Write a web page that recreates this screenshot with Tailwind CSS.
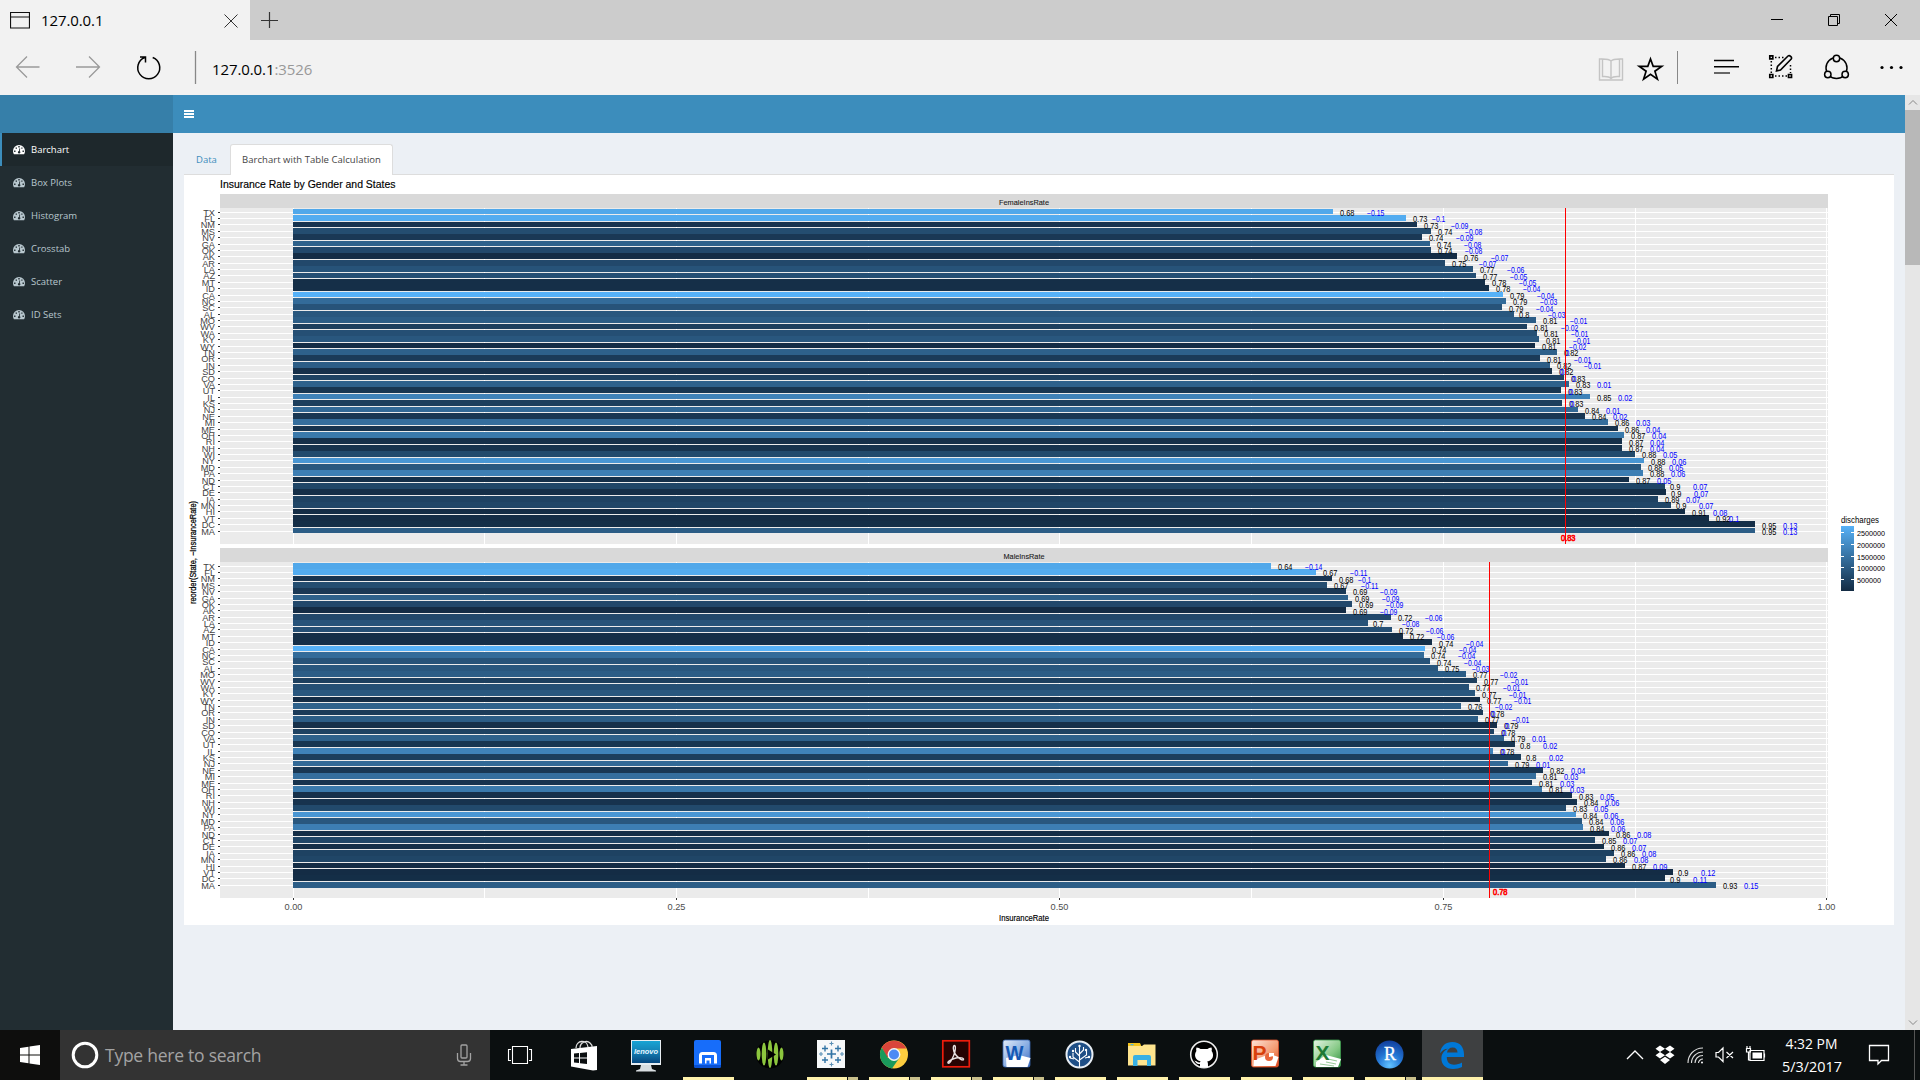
<!DOCTYPE html>
<html lang="en">
<head>
<meta charset="utf-8">
<title>127.0.0.1</title>
<script src="https://cdn.jsdelivr.net/npm/@tailwindcss/browser@4"></script>
</head>
<body class="w-[1920px] h-[1080px] overflow-hidden flex flex-col bg-[#f2f2f2] font-['Open_Sans','Noto_Sans',sans-serif]">
<svg class="hidden">
  <symbol id="dash" viewBox="0 0 12 10"><path fill="currentColor" fill-rule="evenodd" d="M6 0a6 6 0 0 0-6 6c0 1.300.3 2.300.9 3.200h10.200c.6-.9.9-1.900.9-3.200a6 6 0 0 0-6-6zM1.100 5.600h1.400v1.300H1.100zM2.600 2.400h1.400v1.300H2.600zM5.300 1.100h1.400v1.300H5.300zM8.300 2.400h1.200v1.300H8.300zM9.500 5.600h1.400v1.300H9.500zM6.400 3.200l.8.2-.4 2.800c.6.300.8.900.6 1.400-.2.700-.8 1-1.500.9-.7-.2-1.100-.8-1-1.500.1-.5.600-.9 1.100-.9z"/></symbol>
</svg>

<!-- browser tabs -->
<div class="flex h-10 bg-[#cccccc] shrink-0">
  <div class="w-[250px] bg-[#f2f2f2] flex items-center pl-[10px]">
    <svg width="20" height="17" viewBox="0 0 20 17" fill="none" stroke="#111" class="block"><path d="M.5.5h19v15.500h-19zM.5 5h19" stroke-width="1.200"/></svg>
    <span class="ml-[11px] text-[15px] leading-10 text-black w-[183px] tracking-[-0.1px]">127.0.0.1</span>
    <svg width="14" height="14" viewBox="0 0 14 14" stroke="#333" class="mt-px"><path d="M.5.5l13 13M13.500.5l-13 13"/></svg>
  </div>
  <svg width="17" height="17" viewBox="0 0 17 17" stroke="#333" class="ml-[11px] mt-[12px]"><path d="M8.500 0v16M0 8.500h17" stroke-width="1.200"/></svg>
  <div class="flex-1"></div>
  <svg width="140" height="40" viewBox="1765 0 140 40" fill="none" stroke="#000" class="mr-[15px]"><path d="M1771 19.500h12M1828.500 16.500h9v9h-9zM1830.500 16.500v-2h9v9h-2M1885 14l12 12M1897 14l-12 12"/></svg>
</div>

<!-- address bar -->
<div class="flex h-[55px] shrink-0">
  <svg width="200" height="55" viewBox="0 40 200 55" fill="none" stroke="#9a9a9a" stroke-width="1.300">
    <path d="M39.500 67H16.500M27 56.500L16.500 67L27 77.500M76 67h23M89 56.500L99.500 67L89 77.500"/>
    <path stroke="#000" stroke-width="1.500" d="M152.700 57.500A11 11 0 1 1 144.800 57.500M140 57h5.500v5.500"/>
    <path d="M195.500 51v33" stroke="#888"/>
  </svg>
  <span class="ml-[12px] text-[15px] leading-[59px] text-black tracking-[-0.1px]">127.0.0.1<span class="text-[#999]">:3526</span></span>
  <div class="flex-1"></div>
  <svg width="330" height="55" viewBox="1590 40 330 55" fill="none" stroke="#000" stroke-width="1.500">
    <g stroke="#c4c4c4" stroke-width="1.400"><path d="M1602 59h-2.500v21h23v-21h-2.500"/><path d="M1611 61c-2-2-5-2-8.500-2v17.500c3.500 0 6.500-.5 8.500 2c2-2.500 5-2 8.500-2V59c-3.500 0-6.500 0-8.500 2v17"/></g>
    <path stroke-width="1.700" d="M1650.500 59l2.700 7.400h8.500l-6.800 4.800l2.500 8l-6.900-4.800l-6.900 4.800l2.500-8l-6.800-4.800h8.500z"/>
    <path stroke="#888" stroke-width="1" d="M1677.500 51v33"/>
    <path stroke-width="1.400" d="M1714 60.500h20M1714 66.700h25"/><path stroke="#444" stroke-width="1.600" d="M1714 73h16"/>
    <path d="M1769.800 55.800h3v3h-3zM1769.800 74.500h3v3h-3zM1788.500 74.500h3v3h-3z" stroke-width="1.700"/>
    <path d="M1775 57.500h9M1775 76h12M1771.300 61v12M1790.500 65v8" stroke-dasharray="1.500 2"/>
    <path d="M1776.500 71l1-4.500 10.500-10.500c1.500-1.200 4.500 1 3.200 3L1780.500 70z" stroke-width="1.600"/>
    <circle cx="1836.500" cy="68" r="10.500"/><g fill="#f2f2f2"><circle cx="1836.500" cy="58.500" r="3.200"/><circle cx="1827.800" cy="74.500" r="3.200"/><circle cx="1845.200" cy="74.500" r="3.200"/></g>
    <g fill="#000" stroke="none"><circle cx="1882" cy="67.500" r="1.600"/><circle cx="1891.500" cy="67.500" r="1.600"/><circle cx="1901" cy="67.500" r="1.600"/></g>
  </svg>
</div>

<!-- dashboard -->
<div class="flex h-[935px] shrink-0 bg-[#ecf0f5]">
  <aside class="w-[173px] bg-[#222d32] text-[#b8c7ce] text-[9.500px]">
    <div class="h-[38px] bg-[#367fa9]"></div>
    <nav>
      <a class="flex h-[33px] items-center bg-[#1e282c] text-white border-l-2 border-[#3c8dbc] pl-[11px] pt-px gap-[6px]"><svg width="12" height="10"><use href="#dash"/></svg><span class="w-24">Barchart</span></a>
      <a class="flex h-[33px] items-center pl-[13px] pt-px gap-[6px]"><svg width="12" height="10"><use href="#dash"/></svg><span>Box Plots</span></a>
      <a class="flex h-[33px] items-center pl-[13px] pt-px gap-[6px]"><svg width="12" height="10"><use href="#dash"/></svg><span>Histogram</span></a>
      <a class="flex h-[33px] items-center pl-[13px] pt-px gap-[6px]"><svg width="12" height="10"><use href="#dash"/></svg><span>Crosstab</span></a>
      <a class="flex h-[33px] items-center pl-[13px] pt-px gap-[6px]"><svg width="12" height="10"><use href="#dash"/></svg><span>Scatter</span></a>
      <a class="flex h-[33px] items-center pl-[13px] pt-px gap-[6px]"><svg width="12" height="10"><use href="#dash"/></svg><span>ID Sets</span></a>
    </nav>
  </aside>
  <main class="w-[1732px] flex flex-col">
    <div class="h-[38px] bg-[#3c8dbc] pl-[11px] pt-[15px]"><svg width="10" height="9" viewBox="0 0 10 9" fill="#fff"><path d="M0 0h10v2H0zM0 3h10v2H0zM0 6h10v2H0z"/></svg></div>
    <div class="mx-[11px] mt-[11px] flex h-[31px] border-b border-[#dddddd] text-[9.500px]">
      <a class="w-[46px] pl-3 leading-[31px] text-[#3c8dbc]">Data</a>
      <a class="w-[163px] h-[31px] border border-b-0 border-[#ddd] rounded-t-[3px] bg-white text-center leading-[30px] text-[#444] tracking-[0.04px]">Barchart with Table Calculation</a>
    </div>
    <div class="mx-[11px] bg-white h-[750px]"><svg id="chart" class="block" width="1710" height="750" viewBox="184 175 1710 750" font-family="'Liberation Sans',Arial,sans-serif"></svg></div>
  </main>
  <div class="w-[15px] bg-[#e6e6e6] flex flex-col items-center">
    <svg width="15" height="15" viewBox="0 0 15 15" fill="none" stroke="#888"><path d="M4 9.500l4-4 4 4"/></svg>
    <div class="w-[15px] h-[155px] bg-[#b8b8b8]"></div>
    <div class="flex-1"></div>
    <svg width="15" height="15" viewBox="0 0 15 15" fill="none" stroke="#888"><path d="M4 5.500l4 4 4-4"/></svg>
  </div>
</div>

<!-- taskbar -->
<div class="flex h-[50px] shrink-0 bg-[#0b0f10] text-white">
  <div class="w-[60px] flex items-center justify-center bg-[#0e0e0d]"><svg width="20" height="20" viewBox="0 0 20 20" fill="#fff"><path d="M0 3l8.500-1.300V9.500H0zM9.500 1.500L20 0v9.500H9.500zM0 10.500h8.500v7.800L0 17zM9.500 10.500H20V20L9.500 18.500z"/></svg></div>
  <div class="w-[430px] bg-[#333333] flex items-center">
    <svg width="28" height="28" viewBox="0 0 28 28" fill="none" class="ml-[11px]"><circle cx="14" cy="14" r="11.800" stroke="#fff" stroke-width="3"/></svg>
    <span class="ml-[6px] text-[17.500px] w-[351px] text-[#a3a3a3] leading-[50px] tracking-[-0.25px] whitespace-nowrap">Type here to search</span>
    <svg width="16" height="22" viewBox="0 0 16 22" fill="none" stroke="#a3a3a3" stroke-width="1.300"><rect x="5" y="1" width="6" height="13" rx="1"/><path d="M1.500 9v5.500c0 2 1 3 3 3h7c2 0 3-1 3-3V9M8 17.500v3.500M4.500 21h7"/></svg>
  </div>
  <svg width="1430" height="50" viewBox="490 1030 1430 50">
    <defs>
      <linearGradient id="scr" x1="0" y1="0" x2="0" y2="1"><stop offset="0" stop-color="#18a4d4"/><stop offset=".5" stop-color="#1580b4"/><stop offset="1" stop-color="#07477f"/></linearGradient>
      <radialGradient id="rb" cx=".5" cy=".9" r=".9"><stop offset="0" stop-color="#62c4ff"/><stop offset=".5" stop-color="#2274d2"/><stop offset="1" stop-color="#123e9c"/></radialGradient>
      <linearGradient id="wd" x1="0" y1="0" x2="1" y2="1"><stop offset="0" stop-color="#e4edfa"/><stop offset=".6" stop-color="#7ea6e0"/><stop offset="1" stop-color="#3c6cc0"/></linearGradient>
      <linearGradient id="pp" x1="0" y1="0" x2="1" y2="1"><stop offset="0" stop-color="#fde4d8"/><stop offset=".6" stop-color="#f39a70"/><stop offset="1" stop-color="#d9471c"/></linearGradient>
      <linearGradient id="xl" x1="0" y1="0" x2="1" y2="1"><stop offset="0" stop-color="#e6f5e4"/><stop offset=".6" stop-color="#84c884"/><stop offset="1" stop-color="#2c8c3c"/></linearGradient>
    </defs>
    <rect x="1422" y="1030" width="61" height="50" fill="#3e4041"/>
    <g fill="#fff2ab"><path d="M683 1077h51v3h-51zM807 1077h40v3h-40zM869 1077h40v3h-40zM931 1077h40v3h-40zM993 1077h40v3h-40zM1055 1077h51v3h-51zM1117 1077h51v3h-51zM1179 1077h51v3h-51zM1241 1077h51v3h-51zM1303 1077h51v3h-51zM1365 1077h40v3h-40zM1422 1077h61v3h-61z"/></g>
    <path fill="#c9c08c" d="M848 1077h10v3h-10zM910 1077h10v3h-10zM972 1077h10v3h-10zM1034 1077h10v3h-10zM1406 1077h10v3h-10z"/>
    <path fill="none" stroke="#fff" stroke-width="1.100" d="M512.500 1046.500h15v17h-15zM511 1049.500h-2.500v11h2.500M529 1049.500h2.500v11h-2.500"/>
    <g><path fill="#fff" d="M571 1049l26-3v24l-4 .5-22-4z"/><path fill="none" stroke="#ddd" stroke-width="1.300" d="M576 1048c0-8 11-9 12-1M580 1048c0-6 7-8 10-5s2 3 2 4"/><path fill="#0b0f10" d="M574 1053.500l5-.5v4.500h-5zM580 1053l7-.7v5.200h-7zM574 1058.500h5v4.500l-5-.5zM580 1058.500h7v5.500l-7-.8z"/></g>
    <g><path fill="#e8eef2" d="M631 1040h30v25h-30z"/><path fill="url(#scr)" d="M632 1041h28v22h-28z"/><path fill="#d8dde0" d="M641 1065h10l1 4 4 1.500v1h-20v-1l4-1.500z"/><text x="646" y="1054" font-size="6.500" font-weight="bold" font-style="italic" fill="#e8f6ff" text-anchor="middle" textLength="24" lengthAdjust="spacingAndGlyphs" font-family="Liberation Sans,sans-serif">lenovo</text></g>
    <g><rect x="694" y="1040" width="27" height="28" rx="2" fill="#176dfa"/><path fill="#0a50d0" d="M694 1065h27v1a2 2 0 0 1-2 2h-23a2 2 0 0 1-2-2z"/><path fill="none" stroke="#fff" stroke-width="3" d="M700.500 1063.500v-8c0-1.500 0-2 2-2h11c2 0 2 .5 2 2v8"/><path fill="#fff" d="M705 1058h6v5.500h-1.500v-3h-3v3H705z"/></g>
    <g><circle cx="770" cy="1054.500" r="14" fill="#000"/><g fill="#8cc63e"><ellipse cx="758.500" cy="1054" rx="2" ry="6.500"/><ellipse cx="764" cy="1054" rx="2.300" ry="11.500"/><ellipse cx="770" cy="1054" rx="2.300" ry="14"/><ellipse cx="776" cy="1054" rx="2.300" ry="11.500"/><ellipse cx="781.500" cy="1054" rx="2" ry="6.500"/></g><path d="M768 1049.500l8 5-8 5z" fill="#000"/></g>
    <g><rect x="817" y="1040" width="28" height="28" fill="#f6f8f9"/><path fill="none" stroke="#3274a5" stroke-width="1.700" d="M827 1054h9M831.500 1049.500v9"/><path stroke="#3274a5" stroke-width="1.400" d="M822 1048.500h6M825 1045.500v6M835 1048.500h6M838 1045.500v6M822 1060h6M825 1057v6M835 1060h6M838 1057v6"/><path stroke="#5a8fb5" stroke-width="1.100" d="M829.500 1043.500h4M831.500 1041.500v4M829.500 1064.500h4M831.500 1062.500v4M819 1054h4M821 1052v4M840 1054h4M842 1052v4"/></g>
    <g><circle cx="894" cy="1054.500" r="14" fill="#fdcd3f"/><path fill="#d9453a" d="M881.800 1047.500A14 14 0 0 1 906.400 1048.500H894L887 1058z"/><path fill="#1a9a5b" d="M881.800 1047.500A14 14 0 0 0 892 1068.400L900 1057l-12 1z"/><circle cx="894" cy="1054.500" r="6.400" fill="#f4f6f4"/><circle cx="894" cy="1054.500" r="5" fill="#4b8bf4"/></g>
    <g><rect x="942.800" y="1040.800" width="26.500" height="26" fill="#260302" stroke="#ec1c0c" stroke-width="1.700"/><path fill="none" stroke="#e8e0e0" stroke-width="1.400" d="M948 1063c-1-1.500 4-4 8-5s8 0 7.500 1.500-5-1-8-5-2.500-9-1-9 1 6-1 10.500-4 8-5.500 7z"/></g>
    <g><rect x="1003" y="1040" width="27" height="27" rx="2" fill="url(#wd)" stroke="#3a68b4" stroke-width=".8"/><path fill="#fff" d="M1006 1058l13-3 11.500 3-3 9h-21z"/><text x="1014.500" y="1060" font-size="21" font-weight="bold" text-anchor="middle" fill="#1458b4" textLength="18" lengthAdjust="spacingAndGlyphs" font-family="Liberation Sans,sans-serif">W</text></g>
    <g><circle cx="1079.500" cy="1054.500" r="13" fill="#1f4f86" stroke="#e8eef4" stroke-width="2"/><g stroke="#fff" fill="none" stroke-width="1.100"><path d="M1079.500 1067v-20M1079.500 1062l-6.500-5v-4M1079.500 1060l7-5v-5M1079.500 1056l-4-4v-4M1079.500 1054l4-4v-3M1074 1059l-4-1M1085 1058l4-1"/></g><g fill="#fff"><circle cx="1079.500" cy="1046" r="1.200"/><circle cx="1073" cy="1051" r="1.200"/><circle cx="1086" cy="1050" r="1.200"/><circle cx="1070" cy="1057" r="1.200"/><circle cx="1089" cy="1057" r="1.200"/></g></g>
    <g><path fill="#f2c31c" d="M1128 1043h12l1.500 3.500H1128z"/><path fill="#fee48e" d="M1128 1046h14l2-1.500h11.500v21h-27.500z"/><path fill="#4ab2e4" d="M1130.500 1044h3v1.300h-3z"/><path fill="#38b0e4" d="M1133 1057a2 2 0 0 1 2-2h14a2 2 0 0 1 2 2v9h-4v-6h-9.500v6h-4.500z"/></g>
    <g><circle cx="1204" cy="1054.500" r="13.300" fill="#000" stroke="#eee" stroke-width="1.500"/><path fill="#fff" d="M1196.500 1047.500c2 0 3 1 4 1.600h7c1-.6 2-1.600 4-1.600.6 1.700.3 2.700.1 3.500 3 4 1.400 9.500-4.400 10.500.8 1 .8 2 .8 5.500h-8v-3c-4 .6-4-2.500-6-3.200 2.500-.5 3 2 6 1.600 0-.5.200-.8.700-1.200-5.800-1-7-6.500-4.300-10.200-.2-.800-.5-1.800.1-3.500z"/></g>
    <g><rect x="1251.500" y="1040" width="27" height="27" rx="2" fill="url(#pp)" stroke="#d9522c" stroke-width=".8"/><path fill="#fff" d="M1254 1060l16-6 8.500 3-3 9h-22z"/><circle cx="1269" cy="1057" r="4" fill="#e8663a"/><path fill="#fff" d="M1269 1057v-4h5v3z"/><text x="1259.500" y="1060" font-size="21" font-weight="bold" text-anchor="middle" fill="#d8400c" font-family="Liberation Sans,sans-serif">P</text></g>
    <g><rect x="1313.500" y="1040" width="27" height="27" rx="2" fill="url(#xl)" stroke="#3c9a4c" stroke-width=".8"/><path fill="#fff" d="M1316 1062l10-7 15 4-3 8h-22z"/><path stroke="#9aca9a" stroke-width="1.200" d="M1328 1059l9 2M1326 1062l10 2M1320 1064l14 2"/><text x="1322.500" y="1060" font-size="21" font-weight="bold" text-anchor="middle" fill="#1e7a34" font-family="Liberation Sans,sans-serif">X</text></g>
    <g><circle cx="1389.500" cy="1054.500" r="14" fill="url(#rb)"/><text x="1390" y="1060" font-size="18" text-anchor="middle" fill="#fff" stroke="#fff" stroke-width=".3" font-family="Liberation Serif,serif">R</text></g>
    <path fill="#0078d7" d="M1440 1053.300c1-7.500 6-11.300 12.300-11.300 8 0 11.700 5.600 11.700 12v3h-17.200c0 5.600 3.200 7.700 7.200 7.700 3.200 0 5.700-.8 8-2.200v4.600c-2.500 1.200-5.500 1.900-9 1.900-7.200 0-11.600-4.500-11.600-10.500 0-4.500 2.500-8 6.600-9.800-3.500 0-6 1.800-8 4.600zM1447 1052.500h10.500c0-3-1.600-5-4.800-5s-5.300 2-5.700 5z"/>
    <g fill="none" stroke="#fff" stroke-width="1.300"><path d="M1627 1059l8-8 8 8"/>
      <path fill="#fff" stroke="none" fill-rule="evenodd" d="M1660 1045.500l5 3.200 5-3.200 4.500 3.200-4.500 3.300 4.500 3.300-4.500 3.200-5-3.200-5 3.200-4.500-3.200 4.500-3.300-4.500-3.300zM1665 1048.700l-5 3.300 5 3.300 5-3.300zM1660 1060l5-3.300 5 3.300-5 4z"/>
      <path stroke-width="1.100" stroke="#ddd" d="M1688 1063c0-8 6-15 15-15M1691.500 1063c0-6 5-11 11.500-11M1695 1063c0-4 3-7.500 8-7.500M1698.500 1063c0-2 2-4 4.500-4"/><circle cx="1702" cy="1062.500" r="1" fill="#fff" stroke="none"/>
      <path stroke-width="1.200" d="M1716 1052.500h2.500l4.500-4.500v13.500l-4.500-4.500h-2.500zM1726.500 1052l6.500 6M1733 1052l-6.500 6"/>
      <path stroke-width="1.200" d="M1750 1050.500h14v10h-14zM1764.500 1053.500v4M1746.500 1048.500h4v3.500h-4zM1747 1048v-2M1750 1048v-2M1748.500 1052v8h2"/><path fill="#fff" stroke="none" d="M1752.500 1052.500h9.500v6h-9.500z"/>
      <path d="M1869.500 1045.500h19v15h-7l-3.500 3.500v-3.500h-8.500z"/></g>
    <g font-family="'Open Sans',sans-serif" font-size="14.500" fill="#fff" text-anchor="middle"><text x="1811.500" y="1049" textLength="52" lengthAdjust="spacingAndGlyphs">4:32 PM</text><text x="1812" y="1072" textLength="60" lengthAdjust="spacingAndGlyphs">5/3/2017</text></g>
    <path stroke="#555" d="M1914.500 1030v50"/>
  </svg>
</div>

<script>
const states='TX FL NM MS NV GA OK AK AR LA AZ MT ID CA NC SC AL MO WV WA KY WY TN OR IN SD CO VA UT IL KS NJ NE MI ME OH RI NH WI NY MD PA ND CT DE IA MN HI VT DC MA'.split(' ');
// discharges as a fraction of the colour scale
const shade=[.93,.96,.07,.25,.1,.4,.22,.01,.22,.3,.27,.03,.03,1,.48,.3,.33,.37,.15,.27,.33,.01,.4,.12,.37,.04,.17,.4,.08,.65,.14,.46,.09,.5,.06,.58,.04,.06,.23,.8,.33,.62,.02,.2,.03,.17,.2,.01,.01,.02,.37];
const facets=[
 {name:'FemaleInsRate',top:208,off:0,mean:1565,meanLabel:'0.83',meanX:1561,
  end:[1333,1406,1417,1431,1422,1430,1431,1457,1445,1473,1476,1485,1489,1503,1506,1502,1514,1536,1527,1537,1539,1535,1557,1540,1550,1552,1564,1569,1561,1590,1562,1578,1585,1608,1618,1624,1622,1622,1635,1644,1641,1643,1629,1665,1666,1658,1671,1685,1709,1755,1755],
  rate:[68,73,73,74,74,74,74,76,75,77,77,78,78,79,79,79,80,81,81,81,81,81,82,81,82,82,83,83,83,85,83,84,84,86,86,87,87,87,88,88,88,88,87,90,90,89,90,91,92,95,95],
  diff:[-15,-10,-9,-8,-9,-8,-8,-7,-7,-6,-5,-5,-4,-4,-3,-4,-3,-1,-2,-1,-1,-2,0,-1,-1,0,0,1,0,2,0,1,2,3,4,4,4,4,5,6,5,6,5,7,7,7,7,8,10,13,13]},
 {name:'MaleInsRate',top:562,off:354.04,mean:1489,meanLabel:'0.78',meanX:1493,
  end:[1271,1316,1332,1327,1346,1348,1352,1346,1391,1368,1392,1403,1432,1425,1424,1430,1438,1466,1477,1469,1475,1480,1461,1483,1478,1497,1494,1504,1515,1493,1521,1508,1543,1536,1532,1542,1572,1577,1566,1576,1582,1583,1609,1595,1604,1614,1606,1625,1673,1665,1716],
  rate:[64,67,68,67,69,69,69,69,72,70,72,72,74,74,74,74,75,77,77,77,77,77,76,78,77,79,78,79,80,78,80,79,82,81,81,81,83,84,83,84,84,84,86,85,86,86,86,87,90,90,93],
  diff:[-14,-11,-10,-11,-9,-9,-9,-9,-6,-8,-6,-6,-4,-4,-4,-4,-3,-2,-1,-1,-1,-1,-2,0,-1,0,0,1,2,0,2,1,4,3,3,3,5,6,5,6,6,6,8,7,7,8,8,9,12,11,15]}];
const lo=[19,43,67],hi=[86,177,247];
const col=t=>'rgb('+lo.map((v,i)=>Math.round(v+(hi[i]-v)*t)).join()+')';
const rect=(x,y,w,h,f)=>`<rect x="${x}" y="${y}" width="${w}" height="${h}" fill="${f}" shape-rendering="crispEdges"/>`;
const text=(x,y,s,size,f,extra='')=>`<text x="${x}" y="${y}" font-size="${size}" fill="${f}" ${extra}>${s}</text>`;
const fit=w=>`textLength="${w}" lengthAdjust="spacingAndGlyphs"`;
const fmt=v=>String(v/100).replace('-','\u2212');
const width=s=>[...s].reduce((a,c)=>a+(c=='.'?2:c=='\u2212'?3:4),0);
const X=v=>Math.floor(293.1+1533.7*v);
let o='';
for(const p of facets){
  o+=rect(220,p.top-14,1608,14,'#d9d9d9')+rect(220,p.top,1608,336,'#ebebeb');
  for(let k=0;k<=8;k++)o+=rect(X(k/8),p.top,1,336,'#fff');
  states.forEach((s,i)=>{const y=Math.floor(212.12+p.off+6.38*i);o+=rect(220,y,1608,1,'#fff')+rect(218,y,2,1,'#333');
    o+=text(215,y+4.300,s,9.2,'#444','text-anchor="end"')});
  p.end.forEach((e,i)=>{const a=Math.floor(209.25+p.off+6.38*i),b=Math.floor(214.97+p.off+6.38*i);o+=rect(293,a,e-293,b-a,col(shade[i]))});
  p.end.forEach((e,i)=>{const y=Math.round(215.9+p.off+6.38*i),r=fmt(p.rate[i]),w=width(r);o+=text(e+w/2,y,r,8.4,'#000',fit(w+.4))});
  p.end.forEach((e,i)=>{const y=Math.round(215.9+p.off+6.38*i),d=fmt(p.diff[i]),w=width(d);o+=text(e+w*2,y,d,8.4,'#00f',fit(w+.4))});
  o+=rect(p.mean,p.top,1,336,'#f00');
  o+=text(p.meanX,p.top+333,p.meanLabel,8.4,'#f00',fit(14.5)+' stroke="#f00" stroke-width=".6"');
  o+=text(1024,p.top-3,p.name,8,'#1a1a1a',`text-anchor="middle" stroke="#1a1a1a" stroke-width=".1" ${fit(p.off?41:50)}`);
}
for(let k=0;k<=4;k++)o+=rect(X(k/4),898,1,2,'#333')+text(X(k/4)+.5,910,(k/4).toFixed(2),9.2,'#4d4d4d','text-anchor="middle"');
o+=text(220,188,'Insurance Rate by Gender and States',10,'#000',fit(175.5)+' stroke="#000" stroke-width=".15"');
o+=text(1024,921,'InsuranceRate',8.8,'#000','text-anchor="middle" stroke="#000" stroke-width=".15" '+fit(50));
o+=`<text transform="translate(196 604) rotate(-90)" font-size="8.8" ${fit(103)} fill="#000" stroke="#000" stroke-width=".25">reorder(State, \u2212InsuranceRate)</text>`;
o+=text(1841,523,'discharges',8.6,'#000',fit(38));
o+=`<defs><linearGradient id="lg" x1="0" y1="0" x2="0" y2="1"><stop offset="0" stop-color="#56b1f7"/><stop offset="1" stop-color="#132b43"/></linearGradient></defs>`+rect(1841,526,13,65,'url(#lg)');
[2500000,2000000,1500000,1000000,500000].forEach((v,i)=>{const y=Math.floor(532.5+11.75*i);o+=rect(1841,y,3,1,'#fff')+rect(1851,y,3,1,'#fff')+text(1857,y+4,v,7.8,'#000',fit(v<1e6?24:28))});
document.getElementById('chart').innerHTML=o;
</script>
</body>
</html>
